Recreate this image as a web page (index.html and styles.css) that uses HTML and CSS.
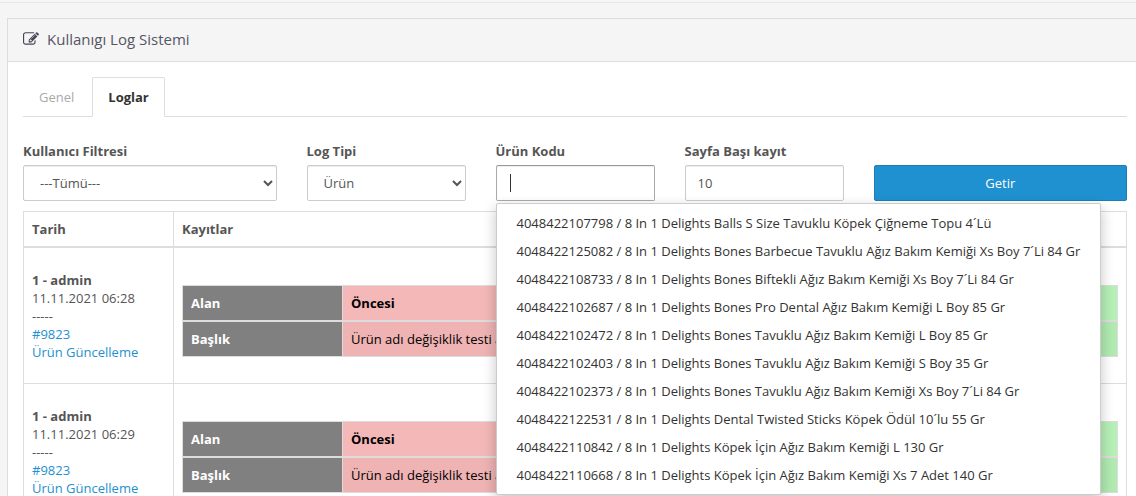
FILE: index.html
```html
<!DOCTYPE html>
<html lang="tr">
<head>
    <meta charset="UTF-8">
    <meta name="viewport" content="width=device-width, initial-scale=1.0">
    <title>Kullanıgı Log Sistemi</title>
    <link rel="stylesheet" href="styles.css">
</head>
<body>
    <div class="topbar"></div>
    <div class="panel">
        <div class="panel-heading">
            <svg class="icon" viewBox="0 0 1792 1792" fill="currentColor" aria-hidden="true">
                <path d="M888 1184l116-116-152-152-116 116v56h96v96h56zm440-720q-16-16-33 1l-350 350q-17 17-1 33t33-1l350-350q17-17 1-33zm80 594v190q0 119-84.500 203.500t-203.500 84.500h-832q-119 0-203.500-84.500t-84.500-203.500v-832q0-119 84.500-203.500t203.500-84.500h832q63 0 117 25 15 7 18 23 3 17-9 29l-49 49q-14 14-32 8-23-6-45-6h-832q-66 0-113 47t-47 113v832q0 66 47 113t113 47h832q66 0 113-47t47-113v-126q0-13 9-22l64-64q15-15 35-7t20 29zm-96-738l288 288-672 672h-288v-288zm444 132l-92 92-288-288 92-92q28-28 68-28t68 28l152 152q28 28 28 68t-28 68z"/>
            </svg>
            <h1>Kullanıgı Log Sistemi</h1>
        </div>
        <div class="panel-body">
            <ul class="tabs">
                <li><a href="#genel">Genel</a></li>
                <li class="active"><a href="#loglar">Loglar</a></li>
            </ul>

            <form class="filters">
                <div class="col-3">
                    <label for="kullanici">Kullanıcı Filtresi</label>
                    <select id="kullanici" class="form-control">
                        <option>---Tümü---</option>
                    </select>
                </div>
                <div class="col-2">
                    <label for="logTipi">Log Tipi</label>
                    <select id="logTipi" class="form-control">
                        <option>Ürün</option>
                    </select>
                </div>
                <div class="col-2 typeahead">
                    <label for="urunKodu">Ürün Kodu</label>
                    <input type="text" id="urunKodu" class="form-control focused" autocomplete="off">
                    <ul class="dropdown-menu">
                        <li>4048422107798 / 8 In 1 Delights Balls S Size Tavuklu Köpek Çiğneme Topu 4´Lü</li>
                        <li>4048422125082 / 8 In 1 Delights Bones Barbecue Tavuklu Ağız Bakım Kemiği Xs Boy 7´Li 84 Gr</li>
                        <li>4048422108733 / 8 In 1 Delights Bones Biftekli Ağız Bakım Kemiği Xs Boy 7´Li 84 Gr</li>
                        <li>4048422102687 / 8 In 1 Delights Bones Pro Dental Ağız Bakım Kemiği L Boy 85 Gr</li>
                        <li>4048422102472 / 8 In 1 Delights Bones Tavuklu Ağız Bakım Kemiği L Boy 85 Gr</li>
                        <li>4048422102403 / 8 In 1 Delights Bones Tavuklu Ağız Bakım Kemiği S Boy 35 Gr</li>
                        <li>4048422102373 / 8 In 1 Delights Bones Tavuklu Ağız Bakım Kemiği Xs Boy 7´Li 84 Gr</li>
                        <li>4048422122531 / 8 In 1 Delights Dental Twisted Sticks Köpek Ödül 10´lu 55 Gr</li>
                        <li>4048422110842 / 8 In 1 Delights Köpek İçin Ağız Bakım Kemiği L 130 Gr</li>
                        <li>4048422110668 / 8 In 1 Delights Köpek İçin Ağız Bakım Kemiği Xs 7 Adet 140 Gr</li>
                    </ul>
                </div>
                <div class="col-2">
                    <label for="sayfa">Sayfa Başı kayıt</label>
                    <input type="text" id="sayfa" class="form-control" value="10">
                </div>
                <div class="col-3">
                    <button type="button" class="btn">Getir</button>
                </div>
            </form>

            <table class="table logs">
                <thead>
                    <tr><th class="date">Tarih</th><th>Kayıtlar</th></tr>
                </thead>
                <tbody>
                    <tr>
                        <td>
                            <b>1 - admin</b><br>
                            11.11.2021 06:28<br>
                            -----<br>
                            <a href="#9823">#9823<br>Ürün Güncelleme</a>
                        </td>
                        <td>
                            <table class="table changes">
                                <thead>
                                    <tr><th class="field">Alan</th><th class="before">Öncesi</th><th class="after"></th></tr>
                                </thead>
                                <tbody>
                                    <tr><th class="field">Başlık</th><td class="before">Ürün adı değişiklik testi a</td><td class="after"></td></tr>
                                </tbody>
                            </table>
                        </td>
                    </tr>
                    <tr>
                        <td>
                            <b>1 - admin</b><br>
                            11.11.2021 06:29<br>
                            -----<br>
                            <a href="#9823">#9823<br>Ürün Güncelleme</a>
                        </td>
                        <td>
                            <table class="table changes">
                                <thead>
                                    <tr><th class="field">Alan</th><th class="before">Öncesi</th><th class="after"></th></tr>
                                </thead>
                                <tbody>
                                    <tr><th class="field">Başlık</th><td class="before">Ürün adı değişiklik testi a</td><td class="after"></td></tr>
                                </tbody>
                            </table>
                        </td>
                    </tr>
                </tbody>
            </table>
        </div>
    </div>
</body>
</html>
```

FILE: styles.css
```css
* {
    box-sizing: border-box;
}
body {
    margin: 0;
    overflow-x: hidden;
    background: #f5f5f5;
    color: #555;
    font-family: "Open Sans", "Noto Sans", sans-serif;
    font-size: 13px;
    line-height: 18px;
}
a {
    color: #1f91d0;
    text-decoration: none;
}
.topbar {
    height: 3px;
    border-bottom: 1px solid #e7e7e7;
}
.panel {
    margin: 15px -7px 0 7px;
    background: #fff;
    border: 1px solid #ddd;
}
.panel-heading {
    display: flex;
    align-items: center;
    gap: 8px;
    height: 43px;
    padding: 0 15px 2px;
    background: #f5f5f5;
    border-bottom: 1px solid #ddd;
}
.panel-heading h1 {
    margin: 0;
    font-size: 15px;
    font-weight: normal;
    color: #556;
}
.icon {
    width: 16px;
    height: 16px;
    color: #445;
}
.panel-body {
    padding: 15px;
}

/* tabs */
.tabs {
    display: flex;
    gap: 2px;
    margin: 0 0 25px;
    padding: 0;
    list-style: none;
    border-bottom: 1px solid #ddd;
}
.tabs li {
    margin-bottom: -1px;
}
.tabs a {
    display: block;
    padding: 10px 15px;
    border: 1px solid transparent;
    border-radius: 2px 2px 0 0;
    color: #aaa;
}
.tabs .active a {
    background: #fff;
    border-color: #ddd;
    border-bottom-color: #fff;
    color: #333;
    font-weight: bold;
}

/* filters */
.filters {
    display: grid;
    grid-template-columns: repeat(12, 1fr);
    column-gap: 30px;
    align-items: end;
    margin-bottom: 10px;
}
.col-2 {
    grid-column: span 2;
}
.col-3 {
    grid-column: span 3;
}
label {
    display: block;
    margin-bottom: 5px;
    font-weight: bold;
}
.form-control,
.btn {
    display: block;
    width: 100%;
    height: 36px;
    padding: 6px 12px;
    border: 1px solid #ccc;
    border-radius: 2px;
    font: inherit;
}
.form-control {
    background-color: #fff;
    color: #555;
    box-shadow: inset 0 1px 1px rgba(0, 0, 0, 0.075);
}
.form-control.focused {
    border-color: #999 #aaa #aaa;
    outline: none;
    caret-color: transparent;
    background: #fff linear-gradient(#333, #333) no-repeat 13px center / 1px 18px;
}
.btn {
    background: #1f91d0;
    border-color: #1b7fb6;
    color: #fff;
    cursor: pointer;
}
.typeahead {
    position: relative;
}
.dropdown-menu {
    position: absolute;
    top: 100%;
    left: 0;
    z-index: 10;
    margin: 2px 0 0;
    padding: 5px 0;
    list-style: none;
    white-space: nowrap;
    background: #fff;
    border: 1px solid #ccc;
    border-radius: 2px;
    box-shadow: 0 5px 14px rgba(0, 0, 0, 0.24);
    color: #333;
}
.dropdown-menu li {
    padding: 5px 20px;
    cursor: pointer;
}

/* tables */
.table {
    width: 100%;
    border-collapse: collapse;
    table-layout: fixed;
}
.table th,
.table td {
    padding: 8px;
    border: 1px solid #ddd;
    text-align: left;
    vertical-align: middle;
}
.table thead th {
    border-bottom-width: 2px;
}
.logs .date {
    width: 150px;
}
.changes {
    margin: 29px 0 18px;
}
.changes .field {
    width: 160px;
    background: #808080;
    color: #fff;
}
.changes .before {
    background: #f4b8b8;
    color: #000;
}
.changes .after {
    background: #b6f0b6;
    color: #000;
}
.changes tbody .before {
    background: #efb3b3;
}
.changes tbody .after {
    background: #b1ebb1;
}
```
